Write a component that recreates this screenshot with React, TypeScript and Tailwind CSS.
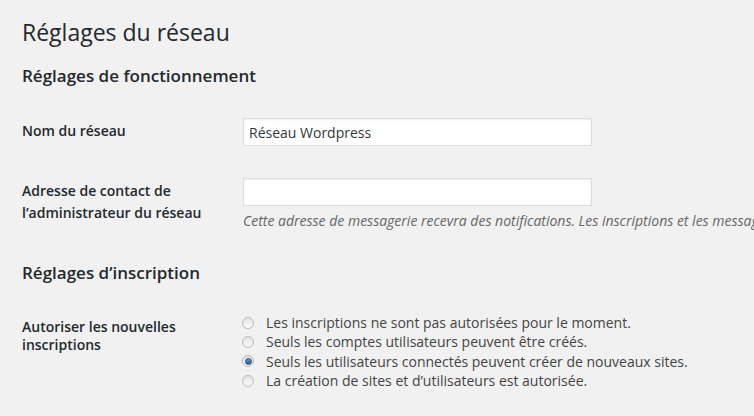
const options = [
  { label: 'Les inscriptions ne sont pas autorisées pour le moment.', checked: false },
  { label: 'Seuls les comptes utilisateurs peuvent être créés.', checked: false },
  { label: 'Seuls les utilisateurs connectés peuvent créer de nouveaux sites.', checked: true },
  { label: 'La création de sites et d’utilisateurs est autorisée.', checked: false },
];

function Radio({ checked }: { checked: boolean }) {
  return (
    <span className="relative -ml-[1px] mr-[12px] flex h-[12px] w-[12px] shrink-0 items-center justify-center rounded-full border border-[#b9b9b9] bg-gradient-to-b from-[#e2e2e2] to-[#fbfbfb]">
      {checked && (
        <span className="h-[7px] w-[7px] rounded-full border border-[#1d4f7c] bg-gradient-to-b from-[#5aa0d6] to-[#1f5d95]" />
      )}
    </span>
  );
}

export default function App() {
  return (
    <div className="h-[416px] w-full overflow-hidden bg-[#f1f1f1] font-['Open_Sans',sans-serif] text-[#23282d]">
      <div className="pt-[17px] pl-[22px]">
        <h1 className="text-[23px] leading-[30px] font-normal">Réglages du réseau</h1>
        <h2 className="mt-[18px] text-[17px] leading-[22px] font-semibold">
          Réglages de fonctionnement
        </h2>

        <div className="mt-[31px] flex items-start">
          <div className="w-[221px] shrink-0 pt-[2px] text-[14px] leading-[22px] font-semibold">
            Nom du réseau
          </div>
          <input
            type="text"
            defaultValue="Réseau Wordpress"
            className="h-[28px] w-[349px] border border-[#dddddd] bg-white px-[5px] text-[14px] text-[#32373c] shadow-[inset_0_1px_2px_rgba(0,0,0,0.07)] outline-none"
          />
        </div>

        <div className="mt-[32px] flex items-start">
          <div className="w-[221px] shrink-0 pt-[2px] text-[14px] leading-[21.5px] font-semibold">
            Adresse de contact de
            <br />
            l’administrateur du réseau
          </div>
          <div className="min-w-0">
            <input
              type="text"
              className="block h-[28px] w-[349px] border border-[#dddddd] bg-white px-[5px] text-[14px] text-[#32373c] shadow-[inset_0_1px_2px_rgba(0,0,0,0.07)] outline-none"
            />
            <p className="mt-[5px] text-[14px] leading-[20px] whitespace-nowrap text-[#666666] italic">
              Cette adresse de messagerie recevra des notifications. Les inscriptions et les messages de
              support seront également envoyés à cette adresse.
            </p>
          </div>
        </div>

        <h2 className="mt-[31px] text-[17px] leading-[22px] font-semibold">Réglages d’inscription</h2>

        <div className="mt-[29px] flex items-start">
          <div className="w-[221px] shrink-0 pt-[5px] text-[14px] leading-[18px] font-semibold">
            Autoriser les nouvelles
            <br />
            inscriptions
          </div>
          <div className="flex flex-col">
            {options.map((o) => (
              <label
                key={o.label}
                className="flex items-center text-[14px] leading-[19.3px] whitespace-nowrap text-[#444444]"
              >
                <Radio checked={o.checked} />
                {o.label}
              </label>
            ))}
          </div>
        </div>
      </div>
    </div>
  );
}
